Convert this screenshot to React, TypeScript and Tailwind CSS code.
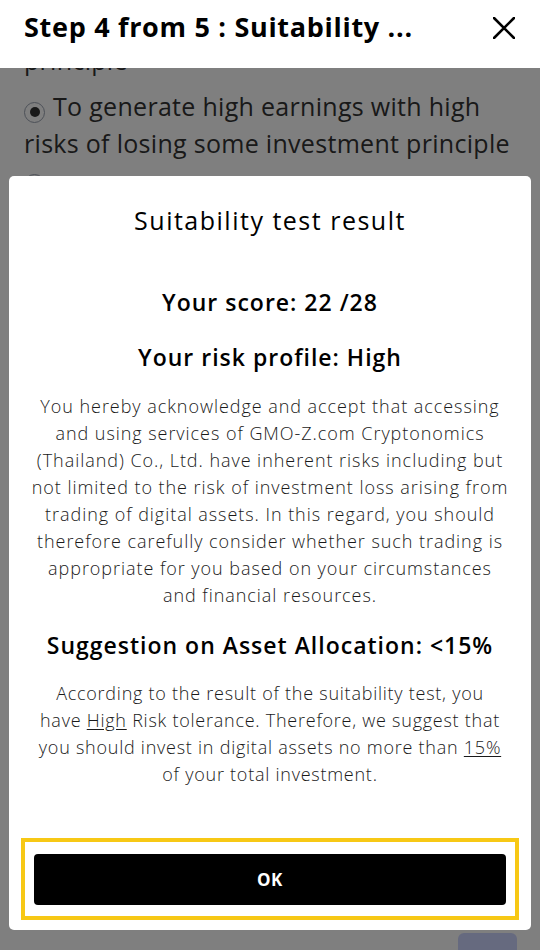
const font = { fontFamily: '"Open Sans", "Noto Sans", Arial, sans-serif' };

export default function App() {
  return (
    <div className="relative h-[950px] w-[540px] overflow-hidden bg-white text-[#333]" style={font}>
      {/* header stays above the backdrop */}
      <header className="relative z-20 flex h-[68px] items-center justify-between bg-white pb-[14px] pl-6 pr-[25px]">
        <h1 className="text-[27px] font-bold tracking-[0.7px] text-black">Step 4 from 5 : Suitability ...</h1>
        <svg width="22" height="22" viewBox="0 0 22 22" className="mt-[2px]">
          <path d="M1 1 L21 21 M21 1 L1 21" stroke="black" strokeWidth="2.6" strokeLinecap="round" />
        </svg>
      </header>

      {/* page content behind the modal */}
      <div className="-mt-[26px] px-6 text-[25px] leading-[37px] tracking-[0.3px]">
        <p>principle</p>
        <div className="mt-[9px]">
          <span className="mr-[8px] inline-flex h-[21px] w-[21px] items-center justify-center rounded-full border border-gray-400 bg-white align-[-1px]">
            <span className="h-[10px] w-[10px] rounded-full bg-[#333]" />
          </span>
          To generate high earnings with high
          <br />
          risks of losing some investment principle
        </div>
        <div className="mt-[12px] h-[21px] w-[21px] rounded-full border border-gray-400 bg-white" />
      </div>
      <div className="absolute bottom-[-20px] right-[23px] h-[37px] w-[59px] rounded-md bg-[#ccd4ff]" />

      {/* backdrop */}
      <div className="absolute inset-0 z-10 bg-black/50" />

      {/* modal */}
      <div className="absolute left-[9px] right-[9px] top-[176px] z-10 flex flex-col rounded-[5px] bg-white text-center text-black">
        <h2 className="mt-7 text-[25px] font-medium leading-[32px] tracking-[1.5px]">Suitability test result</h2>
        <p className="mt-[51px] text-[23px] font-semibold leading-[30px] tracking-[1px]">Your score: 22 /28</p>
        <p className="mt-[25px] text-[23px] font-semibold leading-[30px] tracking-[1px]">Your risk profile: High</p>
        <p className="mt-[21px] whitespace-nowrap text-[18px] font-light leading-[27px] tracking-[0.95px] text-[#1a1a1a]">
          You hereby acknowledge and accept that accessing
          <br />
          and using services of GMO-Z.com Cryptonomics
          <br />
          (Thailand) Co., Ltd. have inherent risks including but
          <br />
          not limited to the risk of investment loss arising from
          <br />
          trading of digital assets. In this regard, you should
          <br />
          therefore carefully consider whether such trading is
          <br />
          appropriate for you based on your circumstances
          <br />
          and financial resources.
        </p>
        <p className="mt-[21px] text-[23px] font-semibold leading-[30px] tracking-[1px]">
          Suggestion on Asset Allocation: &lt;15%
        </p>
        <p className="mt-[20px] whitespace-nowrap text-[18px] font-light leading-[27px] tracking-[0.75px] text-[#1a1a1a]">
          According to the result of the suitability test, you
          <br />
          have <span className="underline underline-offset-2">High</span> Risk tolerance. Therefore, we suggest that
          <br />
          you should invest in digital assets no more than <span className="underline underline-offset-2">15%</span>
          <br />
          of your total investment.
        </p>
        <div className="mx-3 mb-[10px] mt-[50px] border-4 border-[#f7c815] px-[9px] pb-[11px] pt-[12px]">
          <button className="flex h-[51px] w-full items-center justify-center rounded-[4px] bg-black text-[17px] font-bold tracking-[0.5px] text-white">
            OK
          </button>
        </div>
      </div>
    </div>
  );
}
